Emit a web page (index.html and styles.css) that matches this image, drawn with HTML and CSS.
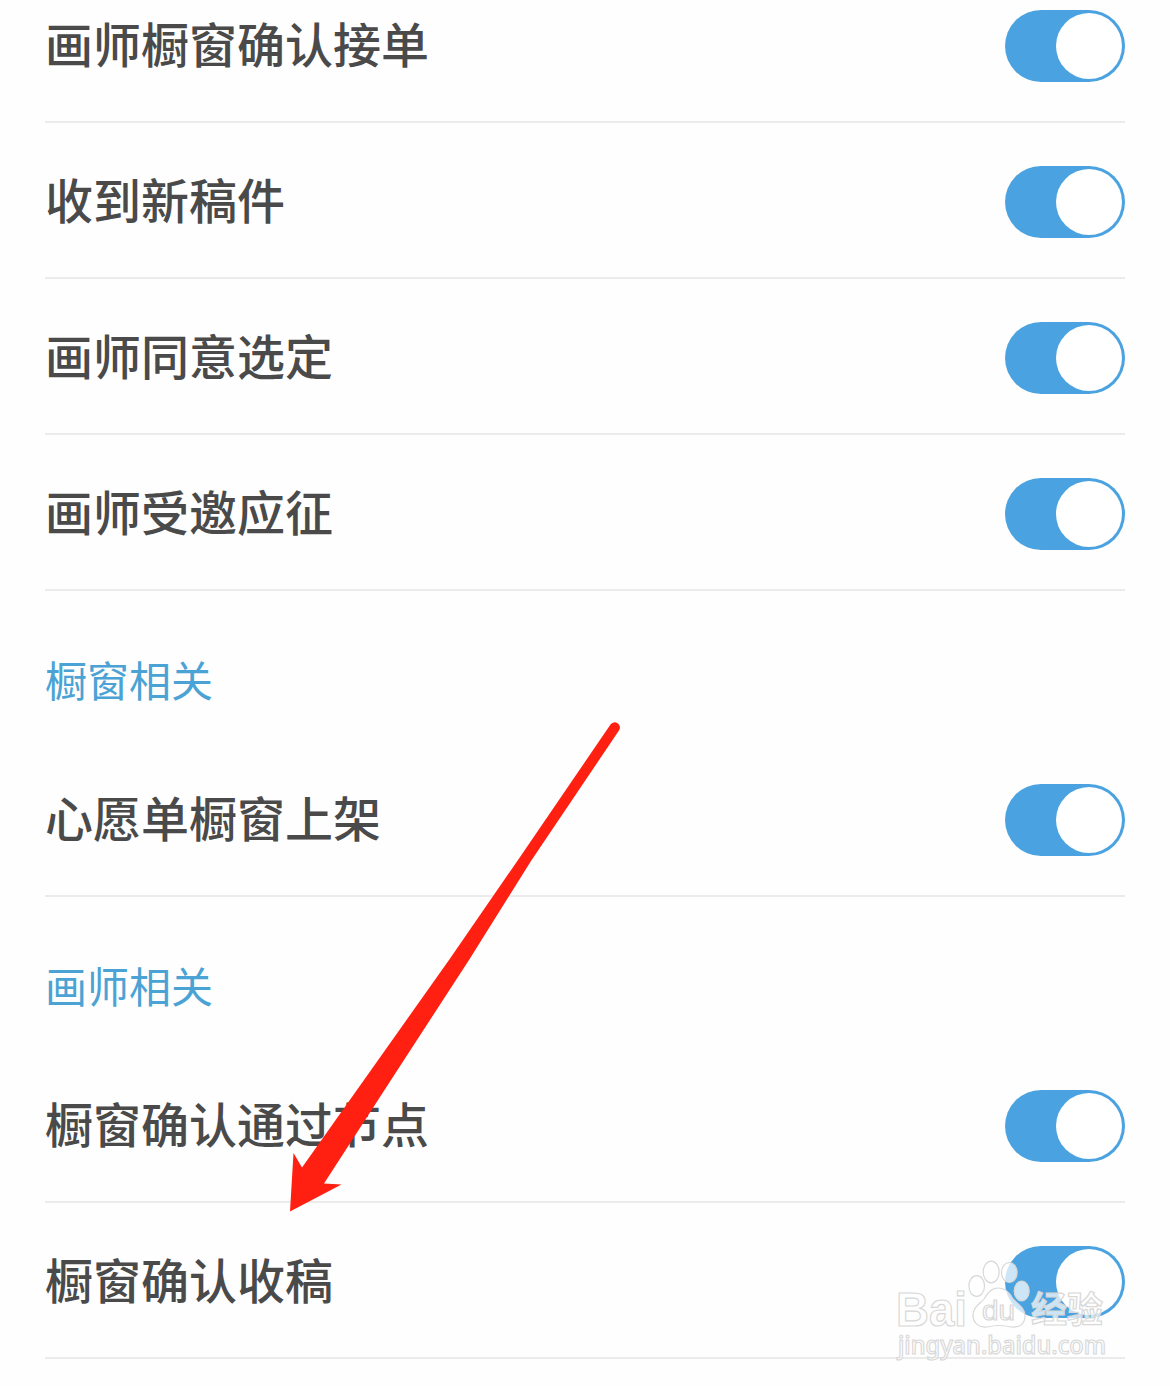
FILE: index.html
```html
<!DOCTYPE html>
<html lang="zh-CN">
<head>
    <meta charset="UTF-8">
    <meta name="viewport" content="width=device-width, initial-scale=1.0">
    <title>消息设置</title>
    <link rel="stylesheet" href="styles.css">
</head>
<body>

    <main class="settings">
        <div class="setting-row first">
            <span class="label">画师橱窗确认接单</span>
            <span class="switch"></span>
        </div>
        <div class="setting-row">
            <span class="label">收到新稿件</span>
            <span class="switch"></span>
        </div>
        <div class="setting-row">
            <span class="label">画师同意选定</span>
            <span class="switch"></span>
        </div>
        <div class="setting-row">
            <span class="label">画师受邀应征</span>
            <span class="switch"></span>
        </div>

        <h2 class="section-title">橱窗相关</h2>
        <div class="setting-row">
            <span class="label">心愿单橱窗上架</span>
            <span class="switch"></span>
        </div>

        <h2 class="section-title">画师相关</h2>
        <div class="setting-row">
            <span class="label">橱窗确认通过节点</span>
            <span class="switch"></span>
        </div>
        <div class="setting-row">
            <span class="label">橱窗确认收稿</span>
            <span class="switch"></span>
        </div>
    </main>

    <!-- red pointer arrow -->
    <svg class="arrow" width="360" height="500" viewBox="280 715 360 500">
        <path d="M610.5 724.5 A5.2 5.2 0 0 1 619.3 730 L531 861 L469 960 L391 1080 L324 1183.5 L341.5 1184.5 L290 1211.5 L293.5 1153 L302 1167.5 L364 1080 L449 960 L518 860 Z"/>
    </svg>

    <!-- site watermark -->
    <svg class="watermark" width="230" height="110" viewBox="890 1255 230 110">
        <text class="wm-logo" x="896" y="1326" textLength="71" lengthAdjust="spacingAndGlyphs">Bai</text>
        <ellipse cx="976.7" cy="1286" rx="7.8" ry="10.3"/>
        <ellipse cx="991.2" cy="1272" rx="8" ry="10.8"/>
        <ellipse cx="1009.3" cy="1272.5" rx="7.8" ry="10"/>
        <ellipse cx="1021.7" cy="1291" rx="7.5" ry="9.8"/>
        <path d="M998.5 1288 C1006 1288 1010 1293 1013 1299 C1018 1304 1025 1308 1025 1316 C1025 1324 1019 1328 1011 1327 C1003 1325 995 1325 987 1327 C979 1328 973 1323 973 1315 C973 1307 980 1304 984 1299 C988 1293 991 1288 998.5 1288 Z"/>
        <text class="wm-du" x="982" y="1320" textLength="33" lengthAdjust="spacingAndGlyphs">du</text>
        <text class="wm-cn" x="1031" y="1323" textLength="72">经验</text>
        <text class="wm-url" x="898" y="1354" textLength="208" lengthAdjust="spacingAndGlyphs">jingyan.baidu.com</text>
    </svg>

</body>
</html>
```

FILE: styles.css
```css
body {
    margin: 0;
    position: relative;
    height: 1386px;
    overflow: hidden;
    background-color: #fefefe;
    font-family: "Noto Sans CJK SC", sans-serif;
}

.settings {
    padding: 0 45px;
}

.setting-row {
    display: flex;
    justify-content: space-between;
    align-items: center;
    box-sizing: border-box;
    height: 156px;
    padding: 43px 0 39px;
    border-bottom: 2px solid #ebebeb;
}

.setting-row.first {
    height: 123px;
    padding-top: 10px;
}

.label {
    padding-bottom: 8px;
    font-size: 48px;
    font-weight: 500;
    line-height: 64px;
    color: #4a4a4a;
}

.switch {
    display: flex;
    justify-content: flex-end;
    box-sizing: border-box;
    width: 120px;
    height: 72px;
    padding: 3px;
    border-radius: 36px;
    background-color: #4aa3e0;
}

.switch::after {
    content: "";
    width: 66px;
    height: 66px;
    border-radius: 50%;
    background-color: #fff;
}

.section-title {
    box-sizing: border-box;
    height: 150px;
    margin: 0;
    padding-top: 58px;
    font-size: 42px;
    font-weight: 400;
    line-height: 60px;
    color: #4aa3d4;
}

.arrow {
    position: absolute;
    left: 280px;
    top: 715px;
    fill: #ff2012;
}

.watermark {
    position: absolute;
    left: 890px;
    top: 1255px;
    fill: rgba(255, 255, 255, 0.72);
    stroke: #d8d8d8;
    stroke-width: 1.2;
}

.watermark text {
    font-family: "Liberation Sans", "Noto Sans CJK SC", sans-serif;
    font-weight: bold;
}

.watermark .wm-logo {
    font-size: 49px;
}

.watermark .wm-du {
    font-size: 27px;
    font-weight: normal;
}

.watermark .wm-cn {
    font-family: "Noto Sans CJK SC", sans-serif;
    font-size: 36px;
}

.watermark .wm-url {
    font-family: "Noto Sans", sans-serif;
    font-size: 25px;
    font-weight: 500;
}
```
